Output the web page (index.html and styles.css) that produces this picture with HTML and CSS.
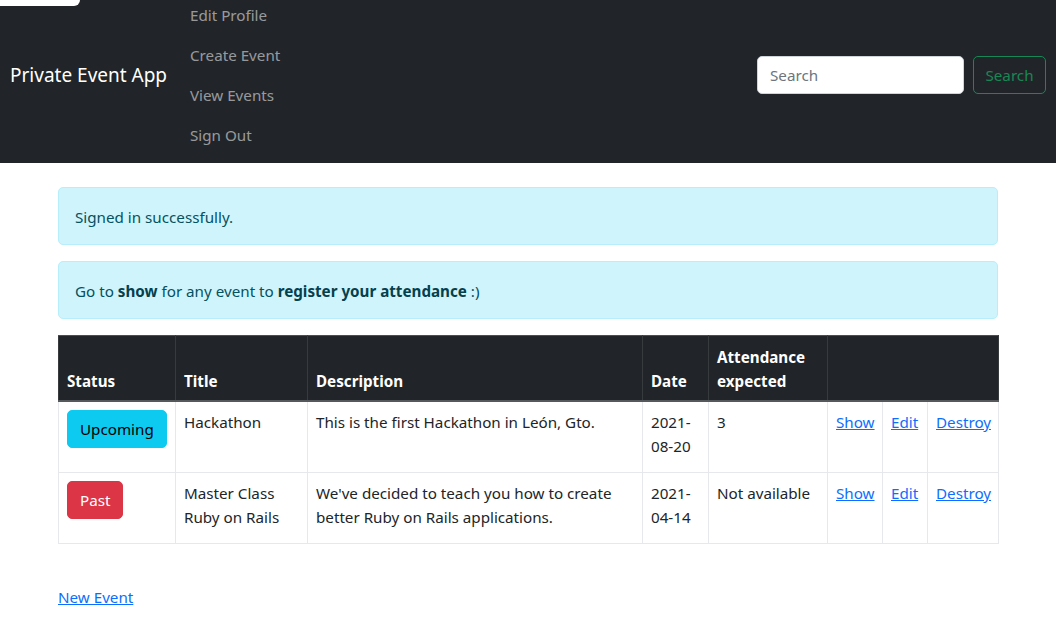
FILE: index.html
```html
<!DOCTYPE html>
<html lang="en">
<head>
<meta charset="utf-8">
<title>Private Event App</title>
<link rel="stylesheet" href="styles.css">
</head>
<body>
<div class="page">
  <nav class="navbar">
    <a class="brand" href="#">Private Event App</a>
    <ul class="nav-list">
      <li><a class="nav-link" href="#">Edit Profile</a></li>
      <li><a class="nav-link" href="#">Create Event</a></li>
      <li><a class="nav-link" href="#">View Events</a></li>
      <li><a class="nav-link" href="#">Sign Out</a></li>
    </ul>
    <form class="search">
      <input class="search-input" type="search" placeholder="Search">
      <button class="search-btn" type="button">Search</button>
    </form>
  </nav>

  <main class="container">
    <div class="alert">Signed in successfully.</div>
    <div class="alert">Go to <strong>show</strong> for any event to <strong>register your attendance</strong> :)</div>

    <table class="events">
      <colgroup>
        <col class="c-status"><col class="c-title"><col class="c-desc"><col class="c-date"><col class="c-att"><col class="c-show"><col class="c-edit"><col class="c-destroy">
      </colgroup>
      <thead>
        <tr>
          <th>Status</th>
          <th>Title</th>
          <th>Description</th>
          <th>Date</th>
          <th>Attendance expected</th>
          <th colspan="3"></th>
        </tr>
      </thead>
      <tbody>
        <tr>
          <td><div class="status-form"><button class="btn btn-info" type="button">Upcoming</button></div></td>
          <td>Hackathon</td>
          <td>This is the first Hackathon in León, Gto.</td>
          <td>2021-08-20</td>
          <td>3</td>
          <td><a href="#">Show</a></td>
          <td><a href="#">Edit</a></td>
          <td><a href="#">Destroy</a></td>
        </tr>
        <tr>
          <td><div class="status-form"><button class="btn btn-danger" type="button">Past</button></div></td>
          <td>Master Class Ruby on Rails</td>
          <td>We've decided to teach you how to create better Ruby on Rails applications.</td>
          <td>2021-04-14</td>
          <td>Not available</td>
          <td><a href="#">Show</a></td>
          <td><a href="#">Edit</a></td>
          <td><a href="#">Destroy</a></td>
        </tr>
      </tbody>
    </table>

    <p class="new-link"><a href="#">New Event</a></p>
  </main>
</div>
<div class="scrolled-tab"></div>
</body>
</html>
```

FILE: styles.css
```css
* { box-sizing: border-box; }

body {
  margin: 0;
  font-family: "Noto Sans", "Open Sans", sans-serif;
  font-size: 15.2px;
  line-height: 24px;
  color: #212529;
  background: #fff;
}

.page { margin-top: -13px; }

.navbar {
  display: flex;
  align-items: center;
  background: #212529;
  padding: 8px 10px 8px 12px;
  height: 176px;
}

.brand {
  flex: 0 0 172px;
  color: #fff;
  font-size: 19px;
  line-height: 30px;
  text-decoration: none;
  margin-left: -2px;
}

.nav-list {
  list-style: none;
  margin: 0;
  padding: 0;
  display: flex;
  flex-direction: column;
  align-self: flex-start;
}

.nav-link {
  display: block;
  padding: 8px;
  color: rgba(255, 255, 255, 0.55);
  text-decoration: none;
}

.search {
  margin-left: auto;
  display: flex;
  gap: 9px;
}

.search-input {
  width: 207px;
  height: 38px;
  padding: 6px 12px;
  border: 1px solid #ced4da;
  border-radius: 5px;
  font: inherit;
  color: #212529;
  background: #fff;
}
.search-input::placeholder { color: #6c757d; }

.search-btn {
  width: 73px;
  height: 38px;
  padding: 6px 10px;
  border: 1px solid #198754;
  border-radius: 5px;
  background: transparent;
  color: #198754;
  font: inherit;
}

.container {
  width: 940px;
  margin: 24px auto 0;
}

.alert {
  background: #cff4fc;
  border: 1px solid #b6effb;
  color: #055160;
  border-radius: 5px;
  padding: 17px 16px 15px;
  margin-bottom: 16px;
}
.alert strong { color: #04414d; font-weight: 700; }

.events {
  width: 940px;
  table-layout: fixed;
  border-collapse: collapse;
  margin: 0;
}
.c-status { width: 117px; }
.c-title { width: 132px; }
.c-desc { width: 335px; }
.c-date { width: 66px; }
.c-att { width: 119px; }
.c-show { width: 55px; }
.c-edit { width: 45px; }
.c-destroy { width: 71px; }

.events th {
  background: #212529;
  color: #fff;
  font-weight: 700;
  text-align: left;
  vertical-align: bottom;
  padding: 9px 8px 7px;
  border: 1px solid #373b3e;
  border-top-color: #4a4e52;
}
.events thead tr { border-bottom: 2px solid #55595c; }

.events td {
  padding: 8px;
  vertical-align: top;
  border: 1px solid #e6e8eb;
}

.events a, .new-link a { color: #0d6efd; text-decoration: underline; }

.status-form { margin-bottom: 16px; }

.btn {
  display: inline-block;
  height: 38px;
  padding: 6px 12px;
  border: 1px solid transparent;
  border-radius: 5px;
  font: inherit;
  line-height: 24px;
}
.btn-info { background: #0dcaf0; border-color: #0dcaf0; color: #000; }
.btn-danger { background: #dc3545; border-color: #dc3545; color: #fff; }

.new-link { margin: 41px 0 0; }

.scrolled-tab {
  position: absolute;
  top: 0;
  left: 0;
  width: 80px;
  height: 6px;
  background: #fff;
  border-bottom-right-radius: 6px;
}
```
